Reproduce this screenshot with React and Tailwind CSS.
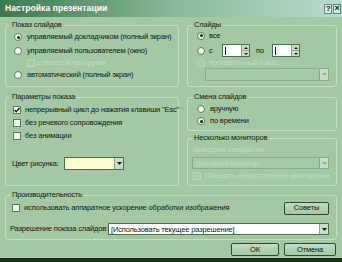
import React from 'react';

const Radio = ({ checked, disabled }) => (
  <span
    className={`w-[8px] h-[8px] shrink-0 rounded-full border flex items-center justify-center ${
      disabled ? 'border-[#bcd6bc] bg-[#a8cba8]' : 'border-[#5a7a5a] bg-[#f4faf4]'
    }`}
  >
    {checked && <span className="w-[3px] h-[3px] rounded-full bg-[#102010]" />}
  </span>
);

const Check = ({ checked, disabled }) => (
  <span
    className={`w-[8px] h-[8px] shrink-0 border flex items-center justify-center ${
      disabled ? 'border-[#bcd6bc] bg-[#a8cba8]' : 'border-[#5a7a5a] bg-[#f4faf4]'
    }`}
  >
    {checked && (
      <svg width="6" height="6" viewBox="0 0 6 6">
        <path d="M0.5 3 L2.3 4.8 L5.5 1" stroke="#102010" strokeWidth="1.4" fill="none" />
      </svg>
    )}
  </span>
);

const Arrow = ({ disabled }) => (
  <span className="w-[9px] h-full shrink-0 bg-[#c8dec8] border-l border-[#8aa88a] flex items-center justify-center">
    <svg width="5" height="3" viewBox="0 0 5 3">
      <path d="M0 0 H5 L2.5 3 Z" fill={disabled ? '#90b090' : '#102010'} />
    </svg>
  </span>
);

const Select = ({ value, className = '', fill = 'bg-white', disabled }) => (
  <div className={`flex items-stretch border ${disabled ? 'bg-[#a6c9a6] border-[#8aac8a]' : `border-[#4d6d4d] ${fill}`} ${className}`}>
    <span className={`flex-1 px-[2px] leading-[11px] truncate ${disabled ? 'text-[#c2dcc2]' : ''}`}>{value}</span>
    <Arrow disabled={disabled} />
  </div>
);

const Spin = () => (
  <div className="w-[28px] h-[13px] flex items-stretch border border-[#4d6d4d] bg-white">
    <span className="flex-1 flex items-center pl-[2px]">
      <span className="w-px h-[8px] bg-[#102010]" />
    </span>
    <span className="w-[8px] flex flex-col bg-[#c8dec8] border-l border-[#8aa88a]">
      <span className="flex-1 flex items-center justify-center border-b border-[#8aa88a]">
        <svg width="4" height="2" viewBox="0 0 4 2"><path d="M0 2 H4 L2 0 Z" fill="#102010" /></svg>
      </span>
      <span className="flex-1 flex items-center justify-center">
        <svg width="4" height="2" viewBox="0 0 4 2"><path d="M0 0 H4 L2 2 Z" fill="#102010" /></svg>
      </span>
    </span>
  </div>
);

const Group = ({ title, className = '', children }) => (
  <fieldset className={`border border-[#c4ddc4] rounded-[3px] px-[4px] min-w-0 ${className}`}>
    <legend className="px-[2px] leading-[10px] text-[#102010]">{title}</legend>
    {children}
  </fieldset>
);

const Btn = ({ children, className = '' }) => (
  <div
    className={`h-[13px] flex items-center justify-center border border-[#304830] rounded-[2px] bg-gradient-to-b from-[#c0dcc0] to-[#a4c8a4] ${className}`}
  >
    {children}
  </div>
);

export default function App() {
  return (
    <div
      className="w-[342px] h-[262px] flex flex-col bg-[#a3c8a3] text-[7.5px] tracking-[-0.15px] whitespace-nowrap text-[#102010] overflow-hidden"
      style={{ fontFamily: '"Liberation Sans", Arial, sans-serif' }}
    >
      {/* title bar */}
      <div className="h-[17px] shrink-0 flex items-center justify-between pl-[5px] pr-[1px] bg-gradient-to-r from-[#3c7a50] via-[#86b898] to-[#b8dccc]">
        <span className="text-white font-bold text-[8.5px] tracking-[0.1px]">Настройка презентации</span>
        <div className="flex gap-[1px]">
          <span className="w-[8px] h-[10px] bg-[#d6ece0] border border-[#6a8a74] flex items-center justify-center font-bold text-[8px] leading-none">?</span>
          <span className="w-[8px] h-[10px] bg-[#d6ece0] border border-[#6a8a74] flex items-center justify-center font-bold text-[9px] leading-none">×</span>
        </div>
      </div>

      <div className="flex-1 flex flex-col px-[5px] pt-[3px]">
        {/* row 1 */}
        <div className="flex gap-[8px]">
          <Group title="Показ слайдов" className="w-[174px] h-[67px]">
            <div className="h-[12px] mt-[1px] flex items-center gap-[5px] pl-[4px]">
              <Radio checked />
              <span>управляемый докладчиком (полный экран)</span>
            </div>
            <div className="h-[12px] mt-[2px] flex items-center gap-[5px] pl-[4px]">
              <Radio />
              <span>управляемый пользователем (окно)</span>
            </div>
            <div className="h-[12px] flex items-center gap-[2px] pl-[17px] text-[#c2dcc2]">
              <Check disabled />
              <span>с полосой прокрутки</span>
            </div>
            <div className="h-[12px] flex items-center gap-[5px] pl-[4px]">
              <Radio />
              <span>автоматический (полный экран)</span>
            </div>
          </Group>

          <Group title="Слайды" className="w-[150px] h-[67px]">
            <div className="h-[11px] flex items-center gap-[4px] pl-[5px]">
              <Radio checked />
              <span>все</span>
            </div>
            <div className="h-[13px] mt-[3px] flex items-center gap-[4px] pl-[5px]">
              <Radio />
              <span className="w-[9px]">с</span>
              <Spin />
              <span className="ml-[2px] w-[12px]">по</span>
              <Spin />
            </div>
            <div className="h-[11px] flex items-center gap-[4px] pl-[5px] text-[#c2dcc2]">
              <Radio disabled />
              <span>произвольный показ:</span>
            </div>
            <Select disabled value="" className="h-[13px] ml-[13px] mr-[3px]" />
          </Group>
        </div>

        {/* row 2 */}
        <div className="flex gap-[8px] mt-[5px]">
          <Group title="Параметры показа" className="w-[174px] h-[94px]">
            <div className="h-[12px] mt-[2px] flex items-center gap-[4px] pl-[3px]">
              <Check checked />
              <span>непрерывный цикл до нажатия клавиши "Esc"</span>
            </div>
            <div className="h-[12px] mt-[1px] flex items-center gap-[4px] pl-[3px]">
              <Check />
              <span>без речевого сопровождения</span>
            </div>
            <div className="h-[12px] mt-[1px] flex items-center gap-[4px] pl-[3px]">
              <Check />
              <span>без анимации</span>
            </div>
            <div className="h-[13px] mt-[15px] flex items-center pl-[2px]">
              <span className="w-[52px]">Цвет рисунка:</span>
              <Select value="" fill="bg-[#fdfbd0]" className="w-[60px] h-[13px]" />
            </div>
          </Group>

          <div className="w-[150px] flex flex-col">
            <Group title="Смена слайдов" className="w-[150px] h-[39px]">
              <div className="h-[12px] mt-[1px] flex items-center gap-[5px] pl-[5px]">
                <Radio />
                <span>вручную</span>
              </div>
              <div className="h-[12px] flex items-center gap-[5px] pl-[5px]">
                <Radio checked />
                <span>по времени</span>
              </div>
            </Group>
            <Group title="Несколько мониторов" className="w-[150px] h-[53px] mt-[2px]">
              <div className="h-[12px] mt-[1px] flex items-center pl-[1px] text-[#c2dcc2]">
                Выводить слайды на:
              </div>
              <Select disabled value="Основной монитор" className="h-[12px] mt-[1px] mr-[3px]" />
              <div className="h-[12px] mt-[1px] flex items-center gap-[4px] pl-[1px] text-[#c2dcc2]">
                <Check disabled />
                <span>Показать представление докладчика</span>
              </div>
            </Group>
          </div>
        </div>

        {/* row 3 */}
        <Group title="Производительность" className="w-[332px] h-[50px] mt-[4px]">
          <div className="h-[12px] mt-[2px] flex items-center gap-[4px] pl-[2px]">
            <Check />
            <span>использовать аппаратное ускорение обработки изображения</span>
            <Btn className="ml-auto mr-[3px] w-[45px]">Советы</Btn>
          </div>
          <div className="h-[12px] mt-[9px] flex items-center">
            <span className="w-[98px]">Разрешение показа слайдов:</span>
            <Select value="[Использовать текущее разрешение]" className="flex-1 h-[12px] mr-[3px]" />
          </div>
        </Group>

        {/* buttons */}
        <div className="flex justify-end gap-[5px] mt-[3px] pr-[1px]">
          <Btn className="w-[48px]">ОК</Btn>
          <Btn className="w-[52px]">Отмена</Btn>
        </div>
      </div>

      <div className="h-[4px] shrink-0 bg-[#1c2c1c]" />
    </div>
  );
}
